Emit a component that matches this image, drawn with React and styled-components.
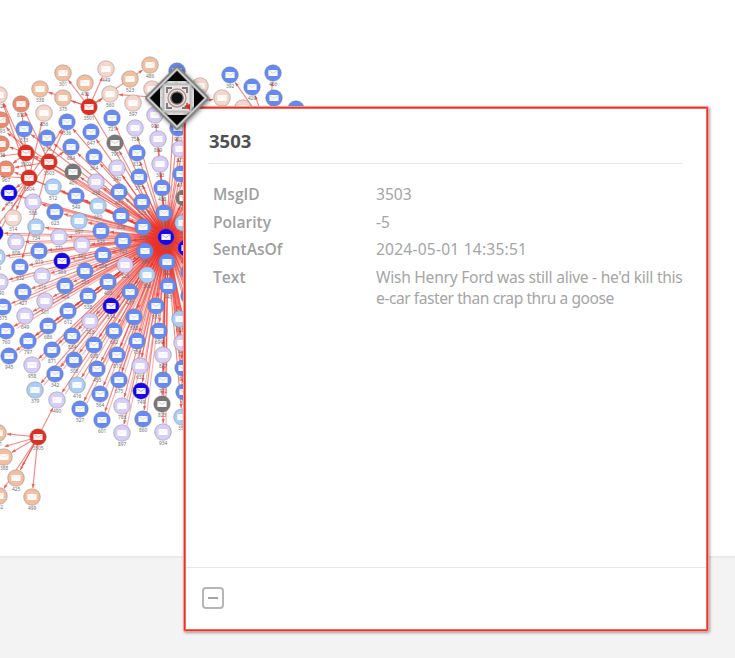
import React from "react";
import styled, { createGlobalStyle } from "styled-components";

const GlobalStyle = createGlobalStyle`
  *, *::before, *::after { box-sizing: border-box; }
  body { margin: 0; background: #fff; font-family: "Noto Sans", "Open Sans", sans-serif; }
`;

const Page = styled.div`
  position: relative;
  width: 735px;
  height: 658px;
  overflow: hidden;
  display: flex;
  flex-direction: column;
  background: #fff;
`;
const GraphPane = styled.main`
  height: 556px;
  svg { display: block; }
`;
const StatusArea = styled.footer`
  flex: 1;
  background: #f3f3f3;
  border-top: 2px solid #eaeaea;
`;
const Card = styled.section`
  position: absolute;
  left: 183px;
  top: 106px;
  width: 526px;
  height: 526px;
  display: flex;
  flex-direction: column;
  background: #fff;
  border: 1px solid #f59c94;
  border-radius: 2px;
  box-shadow: inset 0 0 0 1px #ea3423, inset 0 0 0 2px #f26a5e, 1px 1px 3px rgba(0, 0, 0, 0.35);
  padding: 2px;
`;
const CardBody = styled.div`
  flex: 1;
  padding: 16px 24px 0 23px;
`;
const Title = styled.h1`
  margin: 0;
  height: 39px;
  border-bottom: 1px solid #e6e6e6;
  font-size: 18.5px;
  line-height: 31px;
  font-weight: 700;
  color: #505050;
`;
const Details = styled.dl`
  margin: 20px 0 0;
  display: grid;
  grid-template-columns: 163px 1fr;
  padding-left: 4px;
  row-gap: 6.4px;
  font-size: 15.6px;
  line-height: 21.2px;
`;
const Term = styled.dt`
  font-family: "Open Sans", "Noto Sans", sans-serif;
  font-weight: 600;
  color: #9f9f9f;
  white-space: nowrap;
`;
const Value = styled.dd`
  margin: 0;
  color: #a5a5a5;
`;
const Line = styled.span`
  display: block;
  white-space: nowrap;
  letter-spacing: ${(p) => p.$track || 0}px;
`;
const CardFooter = styled.div`
  height: 62px;
  border-top: 1px solid #e6e6e6;
  display: flex;
  align-items: center;
  padding: 0 0 1px 16px;
`;
const CollapseButton = styled.button`
  width: 22px;
  height: 22px;
  padding: 0;
  display: grid;
  place-items: center;
  border: 2px solid #b6b6b6;
  border-radius: 4px;
  background: #fff;
  &::before { content: ""; width: 10px; height: 2px; background: #a4a4a4; }
`;
const MoveCursor = styled.svg`
  position: absolute;
  left: 142px;
  top: 63px;
  filter: drop-shadow(1px 1px 2px rgba(0, 0, 0, 0.5));
`;

const COLORS = {
  b: "#668af4", l: "#d6cdf8", s: "#abcdf9", d: "#1607ed", g: "#777",
  r: "#e12e22", o: "#ec896d", p: "#f4bea0", k: "#f6d6cb",
};

const HUB = [166, 237];

const SPOKES = [
  ["b",67,122],["b",24,129],["b",47,138],["b",91,132],["b",71,147],
  ["b",112,118],["l",135,128],["g",115,143],["b",137,153],["l",158,139],["l",155,115],
  ["b",177,71],["b",178,128],["l",180,149],["b",94,157],["g",73,172],["l",96,182],
  ["d",9,193],["s",53,187],["b",76,196],["l",33,202],["b",55,212],["s",98,206],
  ["s",79,221],["s",36,227],["l",59,237],["l",16,242],["b",101,231],["l",82,245],
  ["b",39,251],["d",-5,233],["l",160,164],["l",117,168],["b",139,177],["b",181,174],
  ["b",119,192],["b",162,188],["b",142,202],["g",184,198],["b",164,213],["b",121,216],
  ["b",143,227],["s",183,223],["b",123,241],["b",145,251],["d",186,248],["b",103,255],
  ["s",-3,257],["b",20,267],["d",62,261],["l",42,276],["b",85,271],["l",0,282],
  ["b",23,292],["b",65,286],["l",45,301],["b",88,296],["b",3,307],["b",68,311],
  ["l",25,316],["b",48,326],["l",90,321],["b",6,331],["b",28,341],["b",72,336],
  ["b",52,350],["b",94,345],["b",9,356],["b",167,262],["l",125,265],["s",147,275],
  ["b",108,282],["b",168,286],["b",130,292],["d",111,306],["b",156,306],["b",134,317],
  ["s",180,319],["b",114,331],["b",159,331],["b",137,341],["l",182,343],["b",117,355],
  ["l",163,355],["b",189,272],["b",189,296],["l",32,365],["b",74,360],["b",55,374],
  ["s",35,390],["s",77,385],["b",97,369],["l",57,400],["b",80,409],["b",100,394],
  ["b",102,420],["l",140,366],["b",119,380],["b",163,380],["d",141,391],["l",122,406],
  ["g",162,404],["b",143,419],["l",122,433],["l",163,432],["b",183,368],["b",184,392],
  ["s",182,417],
];

const UPPER = [
  ["b",230,75],["b",252,87],["b",273,73],["b",274,98],["b",296,109],
];

const RED = [["r",89,107],["r",26,153],["r",49,162],["r",29,178],["r",38,437]];

const WARM = [
  ["p",63,73],["p",40,89],["p",63,98],["p",85,83],["k",106,69],["p",150,65],
  ["p",130,79],["k",110,94],["k",133,103],["k",152,89],["k",200,86],["k",222,98],
  ["k",243,108],["k",-1,95],["o",21,104],["k",44,113],["o",1,120],["o",1,144],
  ["o",6,169],["k",13,218],["p",-2,433],["p",4,457],["p",16,478],["p",-1,496],["p",32,497],
];

/* [fromX, fromY, toX, toY] */
const LINKS = [
  [89,107,63,73],[89,107,40,89],[89,107,63,98],[89,107,85,83],[89,107,106,69],
  [89,107,150,65],[89,107,110,94],[166,98,110,94],
  [26,153,21,104],[26,153,0,95],[26,153,1,120],[26,153,1,144],[26,153,6,169],
  [49,162,21,104],[49,162,71,147],[49,162,26,153],[49,162,0,128],[49,162,6,169],
  [29,178,44,113],[29,178,6,169],[29,178,9,193],[29,178,-4,218],[29,178,13,218],
  [29,178,-8,176],[29,178,-8,245],[29,178,0,95],[29,178,67,122],
  [26,153,-8,157],[49,162,67,122],[49,162,-8,232],[49,162,20,267],
  [178,105,222,98],[258,115,230,75],[262,115,252,87],[270,115,273,73],
  [38,437,-2,433],[38,437,4,457],[38,437,-4,449],[38,437,16,478],
  [38,437,-1,496],[38,437,32,497],[38,437,18,474],[38,437,57,400],
];

const HIDDEN = [
  [200,120],[206,150],[230,120],[215,170],[240,160],[260,190],[250,215],
  [270,240],[260,260],[250,290],[230,300],[235,330],[215,340],[200,330],
  [205,360],[210,390],[198,405],[193,425],[190,350],[195,380],[188,120],
];

const Edge = ({ from, to, arrow = true, op = 0.58 }) => {
  const dx = to[0] - from[0];
  const dy = to[1] - from[1];
  const n = Math.hypot(dx, dy) || 1;
  const ux = dx / n;
  const uy = dy / n;
  const tx = to[0] - ux * 9;
  const ty = to[1] - uy * 9;
  const bx = tx - ux * 4;
  const by = ty - uy * 4;
  return (
    <g>
      <line x1={from[0]} y1={from[1]} x2={tx} y2={ty} stroke="#f0342b" strokeWidth="1.15" opacity={op} />
      {arrow && (
        <polygon
          points={`${tx},${ty} ${bx - uy * 1.6},${by + ux * 1.6} ${bx + uy * 1.6},${by - ux * 1.6}`}
          fill="#ea4a42"
          opacity="0.8"
        />
      )}
    </g>
  );
};

const MessageNode = ({ type, x, y, label }) => (
  <g transform={`translate(${x} ${y})`}>
    <circle r="8.3" fill={COLORS[type]} stroke="#777" strokeOpacity="0.4" strokeWidth="1.1" />
    <rect x="-4.6" y="-3.1" width="9.2" height="6.2" rx="0.7" fill="#fff" fillOpacity="0.95" />
    <path d="M-4.2 -2.5 L0 0.5 L4.2 -2.5" fill="none" stroke={COLORS[type]} strokeOpacity="0.38" strokeWidth="0.8" />
    <text y="12.7" textAnchor="middle" fontSize="4.8" fill="#707070">{label}</text>
  </g>
);

const NetworkGraph = () => (
  <svg width="735" height="556" viewBox="0 0 735 556" fontFamily="Noto Sans, sans-serif">
    <defs>
      <radialGradient id="hubGlow">
        <stop offset="0" stopColor="#e92b22" />
        <stop offset="0.45" stopColor="#ea3027" stopOpacity="0.75" />
        <stop offset="1" stopColor="#ef4137" stopOpacity="0" />
      </radialGradient>
    </defs>
    {SPOKES.map(([, x, y], i) => <Edge key={i} from={HUB} to={[x, y]} />)}
    {SPOKES.filter((s) => s[2] > 180).map(([, x, y], i) => (
      <Edge key={i} from={[HUB[0] + 2, HUB[1] + 1]} to={[x + 3, y + 2]} arrow={false} op={0.36} />
    ))}
    {HIDDEN.map(([x, y], i) => <Edge key={i} from={HUB} to={[x, y]} arrow={false} />)}
    {RED.slice(0, 4).map(([, x, y], i) => <Edge key={i} from={[x, y]} to={HUB} arrow={false} />)}
    {[[26,153],[49,162],[29,178]].map(([x, y], i) => (
      <Edge key={i} from={[x, y]} to={[HUB[0], HUB[1] - 4]} arrow={false} op={0.5} />
    ))}
    {LINKS.map(([a, b, c, d], i) => <Edge key={i} from={[a, b]} to={[c, d]} />)}
    <circle cx="169" cy="239" r="40" fill="url(#hubGlow)" />
    {[...WARM, ...SPOKES, ...UPPER].map(([type, x, y], i) => (
      <MessageNode key={i} type={type} x={x} y={y} label={String(301 + ((i * 37) % 690))} />
    ))}
    {RED.map(([type, x, y], i) => (
      <MessageNode key={i} type={type} x={x} y={y} label={String(3501 + i)} />
    ))}
    <MessageNode type="d" x={HUB[0]} y={HUB[1]} label="3500" />
  </svg>
);

const DragCursor = () => (
  <MoveCursor width="70" height="70" viewBox="-35 -35 70 70">
    <path d="M0 -29 L29 0 L0 29 L-29 0 Z" fill="#f5f3f2" fillOpacity="0.72" stroke="#858585" strokeWidth="5.5" strokeLinejoin="round" />
    <path d="M0 -29 L29 0 L0 29 L-29 0 Z" fill="none" stroke="#d4d4d4" strokeWidth="1.6" strokeLinejoin="round" />
    <path d="M0 -27 L10 -17 H-10 Z M0 27 L10 17 H-10 Z M-27 0 L-17 -10 V10 Z M27 0 L17 -10 V10 Z" fill="#050505" />
    <rect x="-13.5" y="-13.5" width="27" height="27" fill="#eee" fillOpacity="0.65" stroke="#bbb" strokeWidth="2" />
    <path d="M-10 -5 V-10 H-5 M5 -10 H10 V-5 M10 5 V10 H5 M-5 10 H-10 V5" fill="none" stroke="#777" strokeWidth="1.8" />
    <circle r="9" fill="none" stroke="#c48c88" strokeWidth="1.4" />
    <circle r="6.2" fill="#111" stroke="#777" strokeWidth="1.3" />
    <path d="M7 8 L13 6 V12 Z" fill="#e4261d" />
  </MoveCursor>
);

export default function App() {
  return (
    <Page>
      <GlobalStyle />
      <GraphPane><NetworkGraph /></GraphPane>
      <StatusArea />
      <Card>
        <CardBody>
          <Title>3503</Title>
          <Details>
            <Term>MsgID</Term>
            <Value>3503</Value>
            <Term>Polarity</Term>
            <Value>-5</Value>
            <Term>SentAsOf</Term>
            <Value><Line $track={0.2}>2024-05-01 14:35:51</Line></Value>
            <Term>Text</Term>
            <Value>
              <Line $track={-0.27}>Wish Henry Ford was still alive - he'd kill this</Line>
              <Line $track={-0.45}>e-car faster than crap thru a goose</Line>
            </Value>
          </Details>
        </CardBody>
        <CardFooter><CollapseButton aria-label="Collapse" /></CardFooter>
      </Card>
      <DragCursor />
    </Page>
  );
}
